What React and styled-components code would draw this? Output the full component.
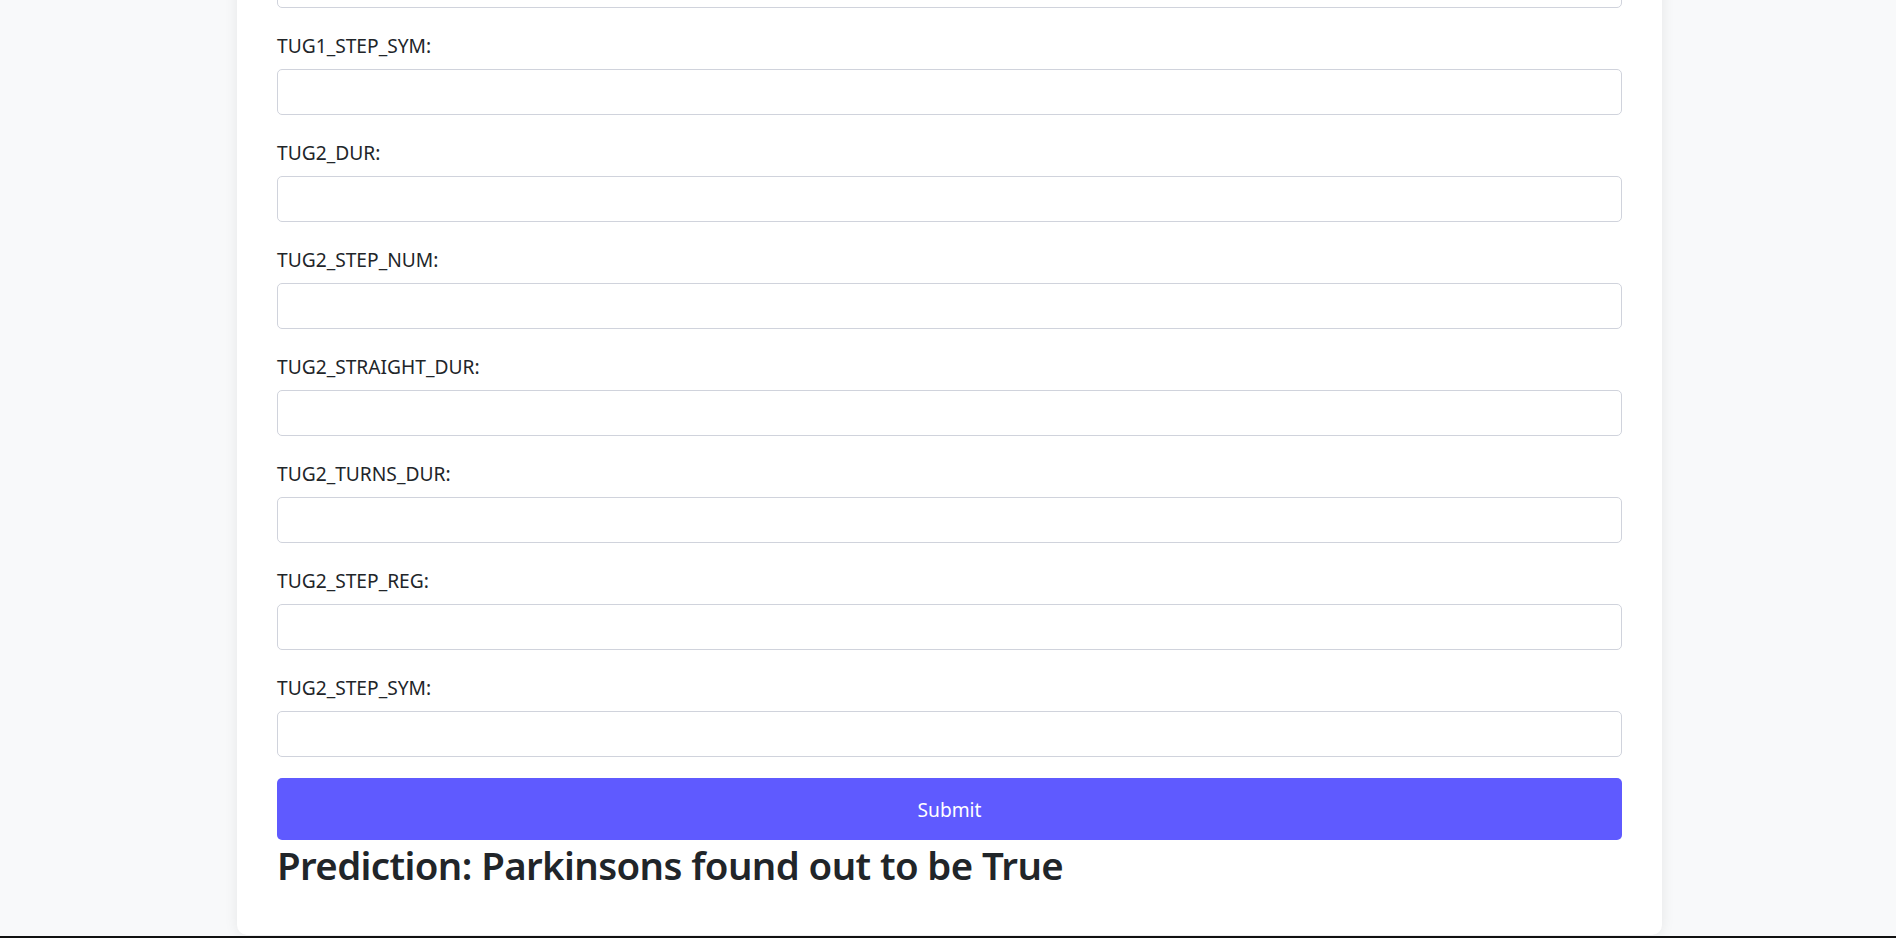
import React from 'react'
import styled, { createGlobalStyle } from 'styled-components'

const GlobalStyle = createGlobalStyle`
  html, body {
    margin: 0;
    padding: 0;
    height: 100%;
  }
  body {
    font-family: "Noto Sans", "Open Sans", "Liberation Sans", sans-serif;
    color: #212529;
    background: #f8f9fa;
  }
  #root {
    height: 100%;
  }
  * {
    box-sizing: border-box;
  }
`

const Page = styled.div`
  height: 100vh;
  display: flex;
  flex-direction: column;
  background: #f8f9fa;
  overflow: hidden;
`

// scrolled to the bottom of the form, so the content sticks to the end
const Viewport = styled.main`
  flex: 1;
  min-height: 0;
  overflow: hidden;
  display: flex;
  flex-direction: column;
  justify-content: flex-end;
  padding-left: 3px;
`

const Card = styled.div`
  flex-shrink: 0;
  width: 1425px;
  margin: 0 auto 1px;
  padding: 40px 40px 44px;
  background: #fff;
  border-radius: 10px;
  box-shadow: 0 0 14px rgba(0, 0, 0, 0.08);
`

const Group = styled.div`
  margin-bottom: 21px;
`

const Label = styled.label`
  display: block;
  font-size: 19.2px;
  line-height: 34px;
  margin-bottom: 6px;
`

const Input = styled.input`
  display: block;
  width: 100%;
  height: 46px;
  padding: 7px 14px;
  font-family: inherit;
  font-size: 19.2px;
  color: #212529;
  background: #fff;
  border: 1px solid #d0d3dc;
  border-radius: 5px;
  outline: none;
`

const SubmitButton = styled.button`
  display: block;
  width: 100%;
  height: 62px;
  border: none;
  border-radius: 5px;
  background: #5f5aff;
  color: #fff;
  font-family: inherit;
  font-size: 19.2px;
  cursor: pointer;
`

const Result = styled.h2`
  margin: 0;
  font-size: 38.4px;
  line-height: 51px;
  font-weight: 600;
  letter-spacing: -0.6px;
  color: #212529;
`

const BottomRule = styled.div`
  height: 2px;
  flex-shrink: 0;
  background: #111;
`

const fields = [
  'TUG1_DUR',
  'TUG1_STEP_NUM',
  'TUG1_STRAIGHT_DUR',
  'TUG1_TURNS_DUR',
  'TUG1_STEP_REG',
  'TUG1_STEP_SYM',
  'TUG2_DUR',
  'TUG2_STEP_NUM',
  'TUG2_STRAIGHT_DUR',
  'TUG2_TURNS_DUR',
  'TUG2_STEP_REG',
  'TUG2_STEP_SYM',
]

const App = () => {
  return (
    <>
      <GlobalStyle />
      <Page>
        <Viewport>
          <Card>
            <form onSubmit={(e) => e.preventDefault()}>
              {fields.map((name) => (
                <Group key={name}>
                  <Label htmlFor={name}>{name}:</Label>
                  <Input id={name} name={name} type="text" />
                </Group>
              ))}
              <SubmitButton type="submit">Submit</SubmitButton>
            </form>
            <Result>Prediction: Parkinsons found out to be True</Result>
          </Card>
        </Viewport>
        <BottomRule />
      </Page>
    </>
  )
}

export default App
